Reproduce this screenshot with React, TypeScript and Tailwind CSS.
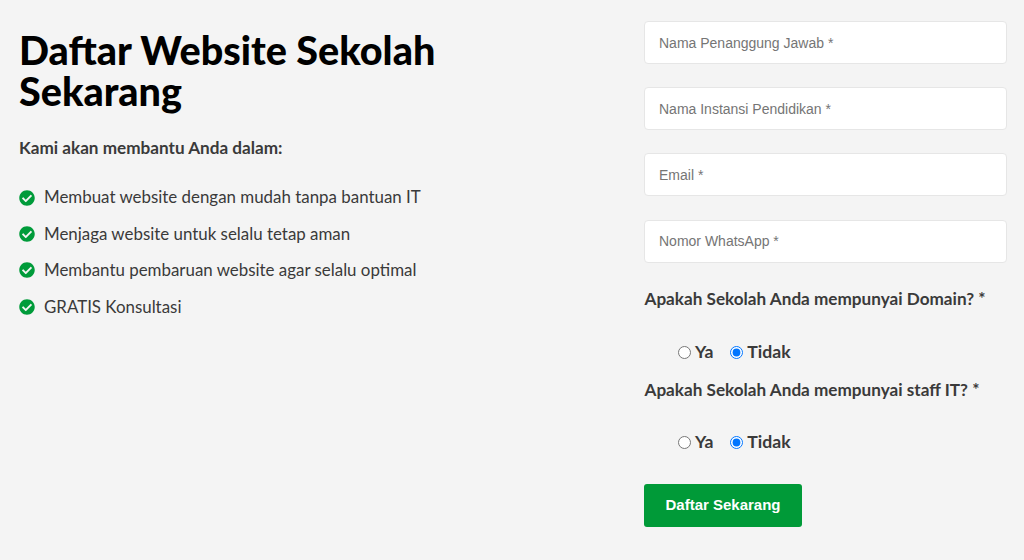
import React from 'react';

const fields = ['Nama Penanggung Jawab *', 'Nama Instansi Pendidikan *', 'Email *', 'Nomor WhatsApp *'];

const benefits = [
  'Membuat website dengan mudah tanpa bantuan IT',
  'Menjaga website untuk selalu tetap aman',
  'Membantu pembaruan website agar selalu optimal',
  'GRATIS Konsultasi',
];

const CheckIcon = () => (
  <svg viewBox="0 0 512 512" className="w-[16px] h-[16px] shrink-0 fill-[#009b3a]">
    <path d="M504 256c0 136.967-111.033 248-248 248S8 392.967 8 256 119.033 8 256 8s248 111.033 248 248zM227.314 387.314l184-184c6.248-6.248 6.248-16.379 0-22.627l-22.627-22.627c-6.248-6.249-16.379-6.249-22.628 0L216 308.118l-70.059-70.059c-6.248-6.248-16.379-6.248-22.628 0l-22.627 22.627c-6.248 6.248-6.248 16.379 0 22.627l104 104c6.249 6.249 16.379 6.249 22.628.001z" />
  </svg>
);

const RadioRow = ({ name }: { name: string }) => (
  <div className="flex items-center h-[24px] pl-[34px] text-[17.6px] font-bold text-[#3a3a3a]">
    <label className="flex items-center">
      <input type="radio" name={name} className="w-[13px] h-[13px] m-0 mt-[1px]" />
      <span className="ml-[4px]">Ya</span>
    </label>
    <label className="flex items-center ml-[17px]">
      <input type="radio" name={name} defaultChecked className="w-[13px] h-[13px] m-0 mt-[1px]" />
      <span className="ml-[4px]">Tidak</span>
    </label>
  </div>
);

export default function App() {
  return (
    <div className="min-h-[560px] bg-[#f4f4f4] flex font-['Lato',sans-serif] text-[#3a3a3a]">
      <div className="w-[644px] shrink-0 pl-[19px] pt-[29px]">
        <h1 className="text-[39.5px] leading-[41px] font-black text-black w-[460px]">Daftar Website Sekolah Sekarang</h1>
        <p className="mt-[24px] text-[17.15px] leading-[26.4px] font-bold">Kami akan membantu Anda dalam:</p>
        <ul className="mt-[23px] flex flex-col gap-[10px]">
          {benefits.map((b) => (
            <li key={b} className="flex items-center gap-[9px] text-[16.9px] leading-[26.4px]">
              <CheckIcon />
              {b}
            </li>
          ))}
        </ul>
      </div>
      <div className="w-[363px] pt-[21px]">
        <div className="flex flex-col gap-[23.2px]">
          {fields.map((f) => (
            <input
              key={f}
              placeholder={f}
              className="w-full h-[43px] px-[14px] bg-white border border-[#e6e6e6] rounded-[4px] text-[14px] font-['Liberation_Sans',sans-serif] placeholder:text-[#757575]"
            />
          ))}
        </div>
        <p className="mt-[23.6px] ml-[0.5px] text-[17.15px] leading-[26px] font-bold">Apakah Sekolah Anda mempunyai Domain? *</p>
        <div className="mt-[28px]"><RadioRow name="domain" /></div>
        <p className="mt-[13px] ml-[0.5px] text-[17.15px] leading-[26px] font-bold">Apakah Sekolah Anda mempunyai staff IT? *</p>
        <div className="mt-[27px]"><RadioRow name="staff" /></div>
        <button className="mt-[30px] w-[158px] h-[43px] bg-[#009a38] rounded-[3px] text-white text-[15px] font-bold font-['Liberation_Sans',sans-serif]">
          Daftar Sekarang
        </button>
      </div>
    </div>
  );
}
